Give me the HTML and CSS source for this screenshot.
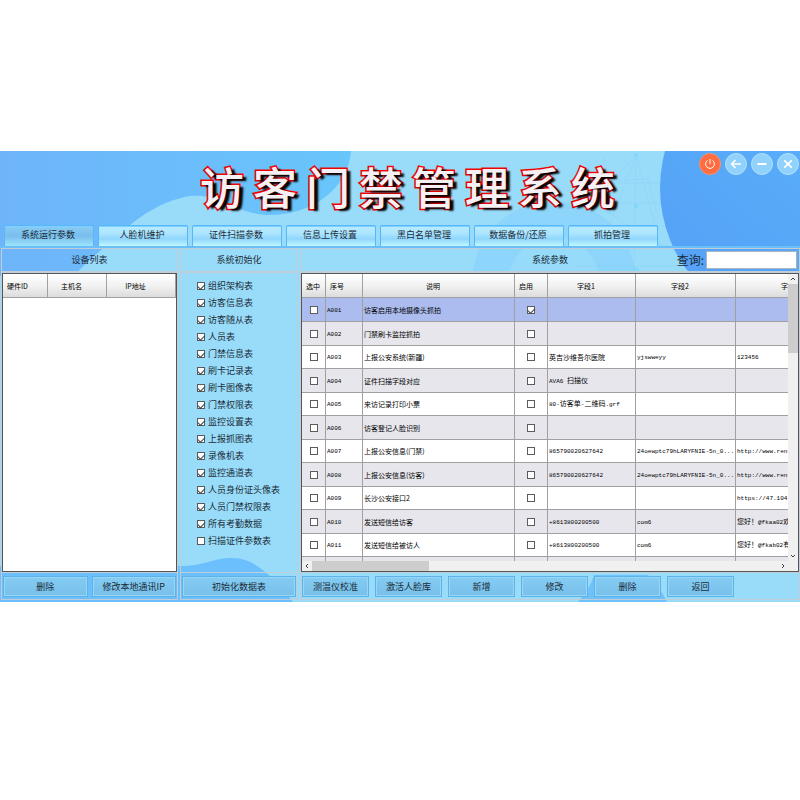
FILE: index.html
```html
<!DOCTYPE html>
<html lang="zh-CN">
<head>
  <meta charset="utf-8">
  <title>访客门禁管理系统</title>
  <link rel="stylesheet" href="styles.css">
</head>
<body>
<div class="app">
  <svg class="backdrop" viewBox="0 0 800 451" preserveAspectRatio="none" aria-hidden="true">
    <defs>
      <linearGradient id="sky" x1="0" y1="0" x2="1" y2="0">
        <stop offset="0" stop-color="#6eb4fa"/>
        <stop offset="1" stop-color="#68c6fb"/>
      </linearGradient>
      <linearGradient id="disc" x1="0" y1="1" x2="1" y2="0">
        <stop offset="0" stop-color="#549ef6"/>
        <stop offset="1" stop-color="#5cb8fa"/>
      </linearGradient>
    </defs>
    <rect width="800" height="451" fill="#99dcfa"/>
    <path d="M0 0H351C348 38 312 64 270 64C252 64 237 57 228 52C216 46 202 44 190 45C155 51 132 72 116 86C98 102 84 113 74 125H0Z" fill="url(#sky)"/>
    <path d="M0 415H180C205 415 213 407 232 407C250 407 260 417 269 424Q285 440 293 451H0Z" fill="#6bbffc"/>
    <circle cx="554" cy="132" r="82" fill="#84cffa" opacity=".55"/>
    <circle cx="554" cy="132" r="46" fill="#9fe0fb" opacity=".6"/>
    <g fill="none" stroke="#7fc8ee" stroke-width="1" opacity=".25">
      <path d="M636 4L570 75M636 4L600 100M636 4L634 120M636 4L662 100M608 32H664M592 52H663M575 75H668M604 5V30L648 28L656 60M560 56L610 62L650 88M590 100L620 84L690 100M575 115H690"/>
    </g>
    <g fill="#6ed5fb" opacity=".5">
      <circle cx="636" cy="4" r="2"/><circle cx="636" cy="55" r="2"/><circle cx="610" cy="62" r="1"/>
      <circle cx="645" cy="80" r="2"/><circle cx="636" cy="119" r="3"/>
    </g>
    <circle cx="799" cy="37" r="139" fill="url(#disc)"/>
    <path d="M578 451Q590 438 594 424H648Q660 436 667 451Z" fill="#6fc1fb"/>
  </svg>

  <header class="top">
    <h1 class="title"><span>访</span><span>客</span><span>门</span><span>禁</span><span>管</span><span>理</span><span>系</span><span>统</span></h1>
    <div class="window-buttons">
      <button class="round power" aria-label="退出"><svg viewBox="0 0 20 20"><path d="M7.4 6.4A4.4 4.4 0 1 0 12.6 6.4M10 5V10"/></svg></button>
      <button class="round" aria-label="后退"><svg viewBox="0 0 20 20"><path stroke-width="1.6" d="M15 10H5.5M9.5 6L5.5 10L9.5 14"/></svg></button>
      <button class="round" aria-label="最小化"><svg viewBox="0 0 20 20"><path stroke-width="2" d="M5.5 10H14.5"/></svg></button>
      <button class="round" aria-label="关闭"><svg viewBox="0 0 20 20"><path stroke-width="1.8" d="M6.3 6.3L13.7 13.7M13.7 6.3L6.3 13.7"/></svg></button>
    </div>
  </header>

  <nav class="tabs">
    <button class="tab active">系统运行参数</button>
    <button class="tab">人脸机维护</button>
    <button class="tab">证件扫描参数</button>
    <button class="tab">信息上传设置</button>
    <button class="tab">黑白名单管理</button>
    <button class="tab">数据备份/还原</button>
    <button class="tab">抓拍管理</button>
  </nav>

  <main class="panels">
    <section class="panel">
      <h2 class="panel-head">设备列表</h2>
      <div class="sheet">
        <table class="grid devices">
          <colgroup><col class="w-hw"><col class="w-host"><col></colgroup>
          <thead><tr><th class="left">硬件ID</th><th>主机名</th><th>IP地址</th></tr></thead>
        </table>
      </div>
      <div class="actions split">
        <button class="btn">删除</button>
        <button class="btn">修改本地通讯IP</button>
      </div>
    </section>

    <section class="panel">
      <h2 class="panel-head">系统初始化</h2>
      <div class="checks">
        <label><input type="checkbox" checked>组织架构表</label>
        <label><input type="checkbox" checked>访客信息表</label>
        <label><input type="checkbox" checked>访客随从表</label>
        <label><input type="checkbox" checked>人员表</label>
        <label><input type="checkbox" checked>门禁信息表</label>
        <label><input type="checkbox" checked>刷卡记录表</label>
        <label><input type="checkbox" checked>刷卡图像表</label>
        <label><input type="checkbox" checked>门禁权限表</label>
        <label><input type="checkbox" checked>监控设置表</label>
        <label><input type="checkbox" checked>上报抓图表</label>
        <label><input type="checkbox" checked>录像机表</label>
        <label><input type="checkbox" checked>监控通道表</label>
        <label><input type="checkbox" checked>人员身份证头像表</label>
        <label><input type="checkbox" checked>人员门禁权限表</label>
        <label><input type="checkbox" checked>所有考勤数据</label>
        <label><input type="checkbox">扫描证件参数表</label>
      </div>
      <div class="actions split">
        <button class="btn">初始化数据表</button>
      </div>
    </section>

    <section class="panel">
      <div class="panel-head with-search">
        <h2>系统参数</h2>
        <div class="search">
          <label for="query">查询:</label>
          <input id="query" type="text">
        </div>
      </div>
      <div class="sheet scroll-frame">
        <div class="viewport">
          <table class="grid params">
            <colgroup><col class="w-pick"><col class="w-no"><col class="w-desc"><col class="w-on"><col class="w-f1"><col class="w-f2"><col></colgroup>
            <thead>
              <tr><th class="left">选中</th><th class="left">序号</th><th>说明</th><th class="left">启用</th><th>字段1</th><th>字段2</th><th>字段3</th></tr>
            </thead>
            <tbody>
              <tr class="selected"><td><input type="checkbox" aria-label="选中 A001"></td><td class="code">A001</td><td>访客启用本地摄像头抓拍</td><td><input type="checkbox" aria-label="启用 A001" checked></td><td></td><td></td><td></td></tr>
              <tr><td><input type="checkbox" aria-label="选中 A002"></td><td class="code">A002</td><td>门禁刷卡监控抓拍</td><td><input type="checkbox" aria-label="启用 A002"></td><td></td><td></td><td></td></tr>
              <tr><td><input type="checkbox" aria-label="选中 A003"></td><td class="code">A003</td><td>上报公安系统(新疆)</td><td><input type="checkbox" aria-label="启用 A003"></td><td>英吉沙维吾尔医院</td><td class="code">yjswweyy</td><td class="code">123456</td></tr>
              <tr><td><input type="checkbox" aria-label="选中 A004"></td><td class="code">A004</td><td>证件扫描字段对应</td><td><input type="checkbox" aria-label="启用 A004"></td><td><span class="code">AVA6 </span>扫描仪</td><td></td><td></td></tr>
              <tr><td><input type="checkbox" aria-label="选中 A005"></td><td class="code">A005</td><td>来访记录打印小票</td><td><input type="checkbox" aria-label="启用 A005"></td><td><span class="code">80-</span>访客单<span class="code">-</span>二维码<span class="code">.grf</span></td><td></td><td></td></tr>
              <tr><td><input type="checkbox" aria-label="选中 A006"></td><td class="code">A006</td><td>访客登记人脸识别</td><td><input type="checkbox" aria-label="启用 A006"></td><td></td><td></td><td></td></tr>
              <tr><td><input type="checkbox" aria-label="选中 A007"></td><td class="code">A007</td><td>上报公安信息(门禁)</td><td><input type="checkbox" aria-label="启用 A007"></td><td class="code">865790020627642</td><td class="code">24oewptc79hLARYFNIE-5n_0...</td><td class="code">http://www.rens</td></tr>
              <tr><td><input type="checkbox" aria-label="选中 A008"></td><td class="code">A008</td><td>上报公安信息(访客)</td><td><input type="checkbox" aria-label="启用 A008"></td><td class="code">865790020627642</td><td class="code">24oewptc79hLARYFNIE-5n_0...</td><td class="code">http://www.rens</td></tr>
              <tr><td><input type="checkbox" aria-label="选中 A009"></td><td class="code">A009</td><td>长沙公安接口2</td><td><input type="checkbox" aria-label="启用 A009"></td><td></td><td></td><td class="code">https://47.104.</td></tr>
              <tr><td><input type="checkbox" aria-label="选中 A010"></td><td class="code">A010</td><td>发送短信给访客</td><td><input type="checkbox" aria-label="启用 A010"></td><td class="code">+8613800200500</td><td class="code">com6</td><td>您好！<span class="code">@fkaa02</span>欢</td></tr>
              <tr><td><input type="checkbox" aria-label="选中 A011"></td><td class="code">A011</td><td>发送短信给被访人</td><td><input type="checkbox" aria-label="启用 A011"></td><td class="code">+8613800200500</td><td class="code">com6</td><td>您好！<span class="code">@fkab02</span>有</td></tr>
              <tr><td></td><td></td><td></td><td></td><td></td><td></td><td></td></tr>
            </tbody>
          </table>
        </div>
        <div class="bar vertical">
          <svg viewBox="0 0 10 10"><path d="M3 6L5 4L7 6"/></svg>
          <div class="thumb"></div>
          <svg viewBox="0 0 10 10"><path d="M3 4L5 6L7 4"/></svg>
        </div>
        <div class="bar horizontal">
          <svg viewBox="0 0 10 10"><path d="M6 3L4 5L6 7"/></svg>
          <div class="thumb"></div>
          <svg viewBox="0 0 10 10"><path d="M4 3L6 5L4 7"/></svg>
        </div>
      </div>
      <div class="actions">
        <button class="btn">测温仪校准</button>
        <button class="btn">激活人脸库</button>
        <button class="btn">新增</button>
        <button class="btn">修改</button>
        <button class="btn">删除</button>
        <button class="btn">返回</button>
      </div>
    </section>
  </main>
</div>
</body>
</html>
```
FILE: styles.css
```css
* {
  box-sizing: border-box;
}
body {
  margin: 0;
  padding-top: 151px;
  background: #fff;
  color: #1c2c38;
  font-family: "Noto Sans CJK SC", sans-serif;
  font-size: 9px;
  line-height: 16px;
}
button, input {
  font: inherit;
  color: inherit;
  margin: 0;
}
h1, h2 {
  margin: 0;
  font-size: inherit;
  font-weight: 400;
}

.app {
  position: relative;
  overflow: hidden;
}
.backdrop {
  position: absolute;
  inset: 0;
  width: 100%;
  height: 100%;
  z-index: -1;
}

/* title and window buttons */
.top {
  display: grid;
  grid-template-columns: 1fr auto 1fr;
  height: 74px;
  padding: 2px 1px 0 16px;
}
.title {
  grid-column: 2;
  display: flex;
  gap: 9px;
  font-size: 44px;
  font-weight: 500;
  line-height: 66px;
  color: #f4f0f4;
  -webkit-text-stroke: 3px #f00000;
  paint-order: stroke fill;
  text-shadow: 4px 2px 2px #000;
}
.window-buttons {
  justify-self: end;
  display: flex;
  gap: 4px;
}
.round {
  width: 22px;
  height: 22px;
  padding: 0;
  border: 1px solid #b4e0fc;
  border-radius: 50%;
  background: #90d2fc;
}
.round.power {
  background: #ff6c40;
  border-color: #f89070;
}
.round svg {
  display: block;
  width: 20px;
  height: 20px;
  fill: none;
  stroke: #fff;
}

/* tabs */
.tabs {
  display: flex;
  gap: 4px;
  padding: 0 4px;
  border-bottom: 2px solid #68bffa;
}
.tab {
  width: 90px;
  height: 21px;
  padding: 0 2px 2px 0;
  border: 1px solid #54b8fa;
  border-bottom: 0;
  border-radius: 2px 2px 0 0;
  background: linear-gradient(#b8ecff 0%, #aee6ff 35%, #90d6fc 65%, #c0f8ff 100%);
  box-shadow: inset 0 1px #80d0ff;
}
.tab.active {
  background: linear-gradient(#8accf4, #78bdec 50%, #9ce4fc 100%);
}

/* panels */
.panels {
  display: grid;
  grid-template-columns: 177px 118px 1fr;
  gap: 2px;
  padding: 0 0 2px 1px;
}
.panel {
  display: grid;
  grid-template-rows: 24px 299px 27px;
  min-width: 0;
  border: 1px solid #c2ccd6;
}
.panel-head {
  text-align: center;
  line-height: 22px;
  border-bottom: 2px solid #c2ccd6;
}
.with-search {
  display: grid;
  grid-template-columns: 1fr auto 1fr;
}
.with-search h2 {
  grid-column: 2;
}
.search {
  justify-self: end;
  display: flex;
  align-items: center;
  gap: 2px;
  padding-right: 2px;
}
.search label {
  font-size: 12px;
  line-height: 18px;
}
.search input {
  width: 91px;
  height: 18px;
  padding: 0 2px;
  border: 1px solid #a8b4c0;
  background: #fff;
}
.sheet {
  min-width: 0;
  background: #fff;
  border: 1px solid #555;
  overflow: hidden;
}
.scroll-frame {
  display: grid;
  grid-template-columns: 1fr 10px;
  grid-template-rows: 1fr 10px;
  background: #f0f0f0;
}
.viewport {
  overflow: hidden;
  background: #fff;
}

/* tables */
.grid {
  width: 100%;
  table-layout: fixed;
  border-spacing: 0;
  font-size: 7px;
  line-height: 10px;
  color: #000;
}
.params {
  min-width: 554px;
}
.w-hw { width: 45px; }
.w-host { width: 59px; }
.w-pick { width: 24px; }
.w-no { width: 37px; }
.w-desc { width: 152px; }
.w-on { width: 33px; }
.w-f1 { width: 88px; }
.w-f2 { width: 100px; }
.grid th, .grid td {
  padding: 0 1px;
  border-right: 1px solid #a0a0a0;
  border-bottom: 1px solid #a0a0a0;
  white-space: nowrap;
  overflow: hidden;
}
.grid th {
  height: 24px;
  padding-right: 12px;
  font-weight: 400;
  background: linear-gradient(#fff, #f2f2f2 50%, #dcdcdc);
}
.grid th.left {
  text-align: left;
  padding: 0 0 0 4px;
}
.grid td {
  height: 23px;
}
.grid tr:nth-child(even) td {
  height: 24px;
  background: #e6e6ec;
}
.grid tr.selected td {
  height: 24px;
  background: #acbcee;
}
.code {
  font-family: "Liberation Mono", monospace;
  font-size: 6px;
  white-space: pre;
}
.grid td.code {
  padding-top: 2px;
}
input[type="checkbox"] {
  appearance: none;
  display: block;
  flex: none;
  width: 8px;
  height: 8px;
  border: 1px solid #5c5c5c;
  background: #fff;
}
input[type="checkbox"]:checked::after {
  content: "";
  display: block;
  width: 6px;
  height: 3px;
  margin: 1px 0 0;
  border-left: 1px solid #444;
  border-bottom: 1px solid #444;
  transform: rotate(-45deg);
}
.grid input[type="checkbox"] {
  margin: 0 auto;
}

/* scroll bars */
.bar {
  display: flex;
  background: #f0f0f0;
}
.bar svg {
  flex: none;
  width: 10px;
  height: 10px;
  fill: none;
  stroke: #404040;
}
.bar .thumb {
  background: #cdcdcd;
}
.vertical {
  flex-direction: column;
  justify-content: space-between;
}
.vertical .thumb {
  height: 24%;
  margin-bottom: auto;
}
.horizontal .thumb {
  width: 24%;
  margin-right: auto;
}

/* table choice list */
.checks {
  display: flex;
  flex-direction: column;
  padding: 4px 0 0 16px;
}
.checks label {
  display: flex;
  align-items: center;
  gap: 3px;
  height: 17px;
}

/* bottom buttons */
.actions {
  display: flex;
  gap: 6px;
  padding: 3px 1px 2px;
  border-top: 1px solid #c2ccd6;
}
.actions.split {
  gap: 4px;
}
.btn {
  width: 67px;
  padding: 0;
  border: 1px solid #5cb2ea;
  background: linear-gradient(#84ccf2, #78c0ea);
  box-shadow: inset 0 0 0 1px #98d6f6;
}
.split .btn {
  flex: 1;
}
```
